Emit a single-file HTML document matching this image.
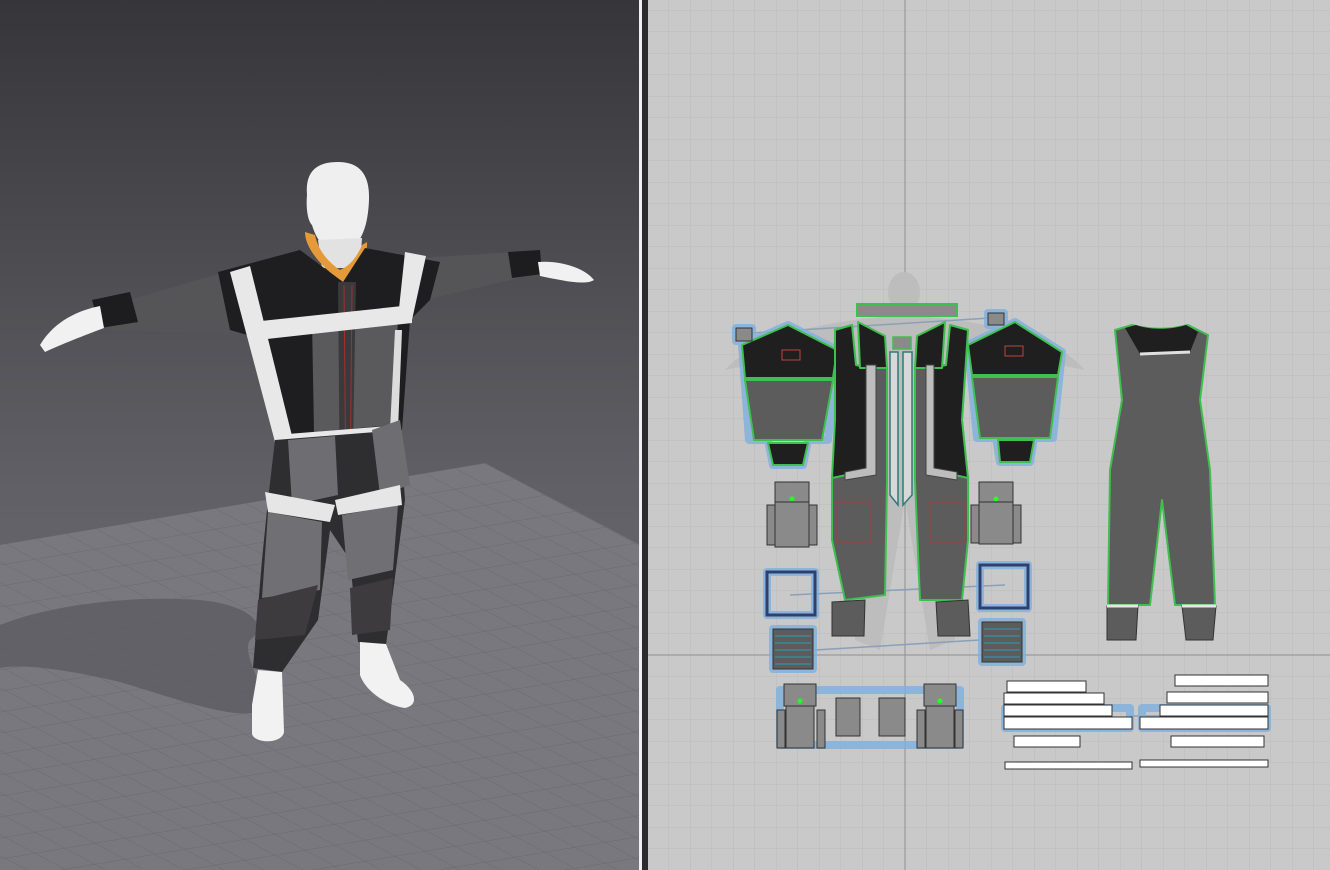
<!DOCTYPE html>
<html><head><meta charset="utf-8"><style>
html,body{margin:0;padding:0;width:1330px;height:870px;overflow:hidden;background:#c9c9c9}
svg{position:fixed;left:0;top:0;display:block}
</style></head><body>
<svg width="1330" height="870" viewBox="0 0 1330 870" xmlns="http://www.w3.org/2000/svg">
<defs>
<linearGradient id="bg" x1="0" y1="0" x2="0" y2="1">
<stop offset="0" stop-color="#36363a"/><stop offset="0.55" stop-color="#5f5f65"/><stop offset="1" stop-color="#76767c"/>
</linearGradient>
<pattern id="g" x="905" y="655" width="21.5" height="21.5" patternUnits="userSpaceOnUse">
<path d="M0 0H21.5M0 0V21.5" stroke="#bcbcbc" stroke-width="1" fill="none"/>
</pattern>
<pattern id="fl" width="100" height="100" patternUnits="userSpaceOnUse" patternTransform="matrix(0.30,0.16,-0.30,0.05,485,463)">
<rect width="100" height="100" fill="#78787e"/>
<path d="M0 0H100M0 0V100" stroke="#66666c" stroke-width="4" fill="none"/>
</pattern>
</defs>
<rect x="0" y="0" width="640" height="870" fill="url(#bg)"/>
<polygon points="0,545 485,463 640,545 640,870 0,870" fill="url(#fl)"/>
<path d="M0,625 C50,605 130,595 200,600 C250,605 270,625 250,640 C240,655 270,690 260,710 C240,722 180,700 120,682 C60,668 20,664 0,668Z" fill="#5d5d63" opacity="0.85"/>
<g>
<path d="M95,310 L225,272 L240,335 L110,330Z" fill="#555558"/>
<path d="M92,300 L130,292 L138,322 L100,328Z" fill="#1d1d1f"/>
<path d="M40,345 C55,320 80,310 100,306 L104,328 C85,335 60,345 45,352Z" fill="#f1f1f1"/>
<path d="M420,258 L515,252 L520,278 L425,300Z" fill="#555558"/>
<path d="M508,252 L540,250 L542,274 L512,278Z" fill="#1d1d1f"/>
<path d="M538,262 C560,260 585,268 594,280 C585,286 560,280 540,276Z" fill="#f1f1f1"/>
<path d="M307,195 C305,170 318,162 338,162 C360,162 370,175 369,200 C368,225 362,245 345,252 C330,255 318,245 312,225 C307,220 306,205 307,195Z" fill="#efefef"/>
<path d="M318,240 L362,238 L360,268 L322,268Z" fill="#e2e2e2"/>
<path d="M305,232 C305,250 325,270 343,282 C358,272 368,258 367,242 L362,245 C355,262 345,268 340,270 C328,262 318,250 315,235Z" fill="#e59a3a"/>
<path d="M218,272 L300,250 L343,282 L365,248 L440,262 L430,300 L410,320 L402,430 L275,440 L265,340 L230,330Z" fill="#1e1e20"/>
<path d="M312,320 L398,315 L394,425 L314,432Z" fill="#5a5a5d"/>
<path d="M338,282 L356,282 L352,500 L340,500Z" fill="#3a3a3c"/>
<path d="M344,285 L346,500 M352,285 L350,500" stroke="#a23030" stroke-width="1"/>
<path d="M230,272 L250,266 L293,440 L275,442Z" fill="#e8e8e8"/>
<path d="M405,252 L426,256 L412,320 L398,318Z" fill="#e8e8e8"/>
<path d="M395,330 L402,330 L398,430 L390,430Z" fill="#dcdcdc"/>
<path d="M252,322 L412,305 L412,323 L258,340Z" fill="#e8e8e8"/>
<path d="M275,435 L400,425 L398,445 L280,455Z" fill="#e8e8e8"/>
<path d="M275,440 L400,430 L405,500 L392,600 L386,645 L358,642 L350,560 L330,530 L318,620 L282,672 L253,668 L262,560 L268,500Z" fill="#2e2e30"/>
<path d="M288,440 L335,436 L338,495 L292,505Z" fill="#6e6e72"/>
<path d="M372,430 L400,420 L410,485 L380,495Z" fill="#6e6e72"/>
<path d="M268,512 L322,522 L320,590 L262,598Z" fill="#707074"/>
<path d="M342,515 L398,505 L393,570 L348,580Z" fill="#707074"/>
<path d="M258,600 L318,585 L305,635 L255,640Z" fill="#3d3b3e"/>
<path d="M350,588 L393,578 L390,630 L352,635Z" fill="#3d3b3e"/>
<path d="M265,492 L335,505 L330,522 L268,512Z" fill="#e6e6e6"/>
<path d="M335,500 L400,485 L402,505 L338,515Z" fill="#e6e6e6"/>
<path d="M258,670 L282,672 L284,732 C282,744 255,744 252,734 L252,705Z" fill="#f2f2f2"/>
<path d="M360,642 L386,644 L400,680 C415,690 420,705 405,708 C385,705 365,690 360,675Z" fill="#f2f2f2"/>
</g>
<rect x="639" y="0" width="3" height="870" fill="#f0f0f0"/>
<rect x="642" y="0" width="6" height="870" fill="#2b2b2d"/>
<rect x="648" y="0" width="682" height="870" fill="#c9c9c9"/>
<rect x="648" y="0" width="682" height="870" fill="url(#g)"/>
<line x1="905" y1="0" x2="905" y2="870" stroke="#8e8e8e"/>
<line x1="648" y1="655" x2="1330" y2="655" stroke="#8e8e8e"/>
<g fill="#bdbdbd">
<ellipse cx="904" cy="292" rx="16" ry="20"/>
<path d="M725,370 C760,330 840,320 905,315 C970,320 1050,330 1085,370 L1060,365 L960,360 L955,640 L930,650 L905,500 L880,650 L855,640 L850,360 L750,365Z"/>
</g>
<g stroke="#8aa0b8" stroke-width="1.5" fill="none">
<path d="M752,333 L990,318 M790,595 L1005,585 M815,650 L980,640 M1130,716 L1160,716"/>
</g>
<g stroke="#7fb0dd" stroke-width="8" stroke-linejoin="round" fill="none" opacity="0.8">
<path d="M742,345 L788,325 L837,350 L828,440 L808,440 L803,465 L773,465 L768,440 L749,440Z"/>
<path d="M968,345 L1015,322 L1062,352 L1053,438 L1034,438 L1030,462 L1000,462 L996,438 L977,438Z"/>
<rect x="736" y="328" width="16" height="13"/><rect x="988" y="313" width="16" height="12"/>
<rect x="767" y="572" width="48" height="43"/><rect x="980" y="565" width="48" height="43"/>
<rect x="773" y="629" width="40" height="40"/><rect x="982" y="622" width="40" height="40"/>
<rect x="780" y="690" width="180" height="55"/>
<rect x="1005" y="708" width="125" height="20"/><rect x="1142" y="708" width="125" height="20"/>
</g>
<g stroke="#3fbf4f" stroke-width="2" stroke-linejoin="round">
<path d="M742,345 L788,325 L837,350 L833,378 L745,378Z" fill="#1f1f1f"/>
<path d="M745,380 L833,380 L822,440 L754,440Z" fill="#5c5c5c"/>
<path d="M768,443 L808,443 L803,465 L773,465Z" fill="#1f1f1f"/>
<path d="M968,345 L1015,322 L1062,352 L1058,375 L972,375Z" fill="#1f1f1f"/>
<path d="M972,377 L1058,377 L1050,438 L980,438Z" fill="#5c5c5c"/>
<path d="M998,440 L1034,440 L1030,462 L1000,462Z" fill="#1f1f1f"/>
</g>
<rect x="782" y="350" width="18" height="10" fill="none" stroke="#c04040"/>
<rect x="1005" y="346" width="18" height="10" fill="none" stroke="#c04040"/>
<rect x="736" y="328" width="16" height="13" fill="#8a8a8a" stroke="#333"/>
<rect x="988" y="313" width="16" height="12" fill="#8a8a8a" stroke="#333"/>
<rect x="857" y="304" width="100" height="12" fill="#8a8a8a" stroke="#3fbf4f" stroke-width="2"/>
<rect x="893" y="337" width="18" height="12" fill="#8a8a8a" stroke="#3fbf4f" stroke-width="1.5"/>
<g stroke="#3fbf4f" stroke-width="2" stroke-linejoin="round">
<path d="M835,330 L852,325 L853,365 L887,368 L887,480 L885,595 L845,600 L832,540 L832,480 L836,420Z" fill="#5c5c5c"/>
<path d="M835,330 L852,325 L856,365 L868,368 L870,470 L832,478 L835,420Z" fill="#1f1f1f"/>
<path d="M858,322 L885,336 L887,368 L860,368Z" fill="#1f1f1f"/>
<path d="M968,330 L950,325 L947,365 L915,368 L915,480 L920,600 L962,600 L968,540 L968,480 L962,420Z" fill="#5c5c5c"/>
<path d="M968,330 L950,325 L946,365 L933,368 L932,470 L968,478 L962,420Z" fill="#1f1f1f"/>
<path d="M945,322 L917,336 L915,368 L942,368Z" fill="#1f1f1f"/>
</g>
<path d="M890,352 L898,352 L898,505 L890,495Z M903,352 L912,352 L912,495 L903,505Z" fill="#d8d8d8" stroke="#2f7a7a" stroke-width="1.5"/>
<path d="M866,365 L876,365 L876,475 L845,480 L845,472 L866,468Z M934,365 L926,365 L926,475 L957,480 L957,472 L934,468Z" fill="#bdbdbd" stroke="#444" stroke-width="1"/>
<rect x="837" y="502" width="34" height="40" fill="none" stroke="#a04040"/>
<rect x="930" y="502" width="34" height="40" fill="none" stroke="#a04040"/>
<path d="M832,602 L865,600 L864,636 L832,636Z M936,602 L968,600 L970,636 L938,636Z" fill="#5c5c5c" stroke="#333"/>
<path d="M1115,330 L1132,325 C1150,330 1170,330 1188,325 L1208,335 L1200,400 L1210,470 L1215,605 L1175,605 L1162,500 L1150,605 L1108,605 L1110,470 L1122,400Z" fill="#5c5c5c" stroke="#3fbf4f" stroke-width="2" stroke-linejoin="round"/>
<path d="M1125,328 L1136,325 C1150,330 1170,330 1186,325 L1198,332 L1190,352 L1140,354Z" fill="#1f1f1f"/>
<path d="M1140,354 L1190,352" stroke="#e0e0e0" stroke-width="3"/>
<path d="M1107,606 L1138,606 L1136,640 L1107,640Z M1182,606 L1216,606 L1213,640 L1186,640Z" fill="#5c5c5c" stroke="#333"/>
<path d="M1107,606 L1138,606 M1182,606 L1216,606" stroke="#e6e6e6" stroke-width="3"/>
<g fill="#8a8a8a" stroke="#333" stroke-width="1">
<rect x="775" y="482" width="34" height="20"/><rect x="775" y="502" width="34" height="45"/><rect x="767" y="505" width="8" height="40"/><rect x="809" y="505" width="8" height="40"/>
<rect x="979" y="482" width="34" height="20"/><rect x="979" y="502" width="34" height="42"/><rect x="971" y="505" width="8" height="38"/><rect x="1013" y="505" width="8" height="38"/>
</g>
<circle cx="792" cy="499" r="2.5" fill="#2f2"/><circle cx="996" cy="499" r="2.5" fill="#2f2"/>
<rect x="767" y="572" width="48" height="43" fill="none" stroke="#2f3f6f" stroke-width="3"/>
<rect x="980" y="565" width="48" height="43" fill="none" stroke="#2f3f6f" stroke-width="3"/>
<rect x="773" y="629" width="40" height="40" fill="#5c5c5c" stroke="#333"/>
<rect x="982" y="622" width="40" height="40" fill="#5c5c5c" stroke="#333"/>
<g stroke="#3a8a9a" stroke-width="1.5"><path d="M775,636H811M775,643H811M775,650H811M775,657H811M775,664H811M984,629H1020M984,636H1020M984,643H1020M984,650H1020M984,657H1020"/></g>
<g fill="#8a8a8a" stroke="#333">
<rect x="784" y="684" width="32" height="22"/><rect x="786" y="706" width="28" height="42"/><rect x="777" y="710" width="8" height="38"/><rect x="817" y="710" width="8" height="38"/>
<rect x="836" y="698" width="24" height="38"/><rect x="879" y="698" width="26" height="38"/>
<rect x="924" y="684" width="32" height="22"/><rect x="926" y="706" width="28" height="42"/><rect x="917" y="710" width="8" height="38"/><rect x="955" y="710" width="8" height="38"/>
</g>
<circle cx="800" cy="701" r="2.5" fill="#2f2"/><circle cx="940" cy="701" r="2.5" fill="#2f2"/>
<g fill="#fff" stroke="#333" stroke-width="1">
<rect x="1007" y="681" width="79" height="11"/><rect x="1004" y="693" width="100" height="11"/><rect x="1004" y="705" width="108" height="11"/><rect x="1004" y="717" width="128" height="12"/>
<rect x="1014" y="736" width="66" height="11"/><rect x="1005" y="762" width="127" height="7"/>
<rect x="1175" y="675" width="93" height="11"/><rect x="1167" y="692" width="101" height="11"/><rect x="1160" y="705" width="108" height="11"/><rect x="1140" y="717" width="128" height="12"/>
<rect x="1171" y="736" width="93" height="11"/><rect x="1140" y="760" width="128" height="7"/>
</g>
</svg>
</body></html>
